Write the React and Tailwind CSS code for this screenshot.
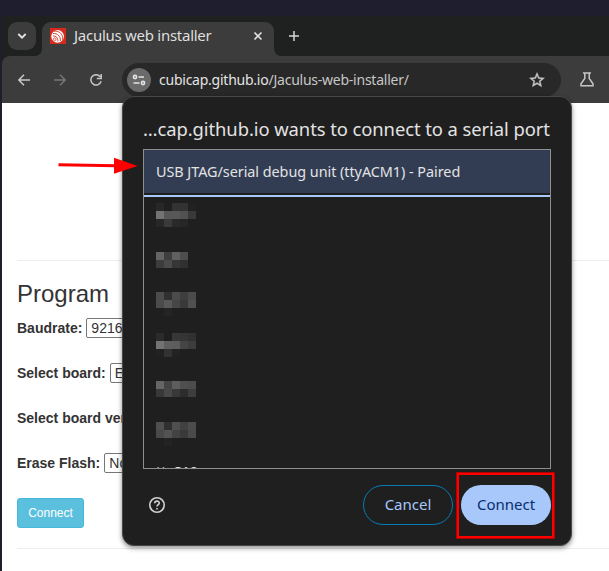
import React from 'react';

const NOTO = "font-['Noto_Sans',sans-serif]";

const SHADES = [
  { h: 'h-[49px]', rows: [['#272727', '#1f1f1f', '#333333', '#333333', '#212121'], ['#737373', '#575757', '#585858', '#525252', '#393939'], ['#272727', '#3a3a3a', '#292929', '#262626', '#1f1f1f']] },
  { h: 'h-[40px]', rows: [['#646464', '#3e3e3e', '#606060', '#4e4e4e', '#1f1f1f'], ['#3c3c3c', '#4b4b4b', '#363636', '#303030', '#1f1f1f']] },
  { h: 'h-[41px]', rows: [['#4c4c4c', '#303030', '#4b4b4b', '#3e3e3e', '#4b4b4b'], ['#4b4b4b', '#585858', '#464646', '#393939', '#505050'], ['#1f1f1f', '#242424', '#1f1f1f', '#1f1f1f', '#1f1f1f']] },
  { h: 'h-[48px]', rows: [['#2b2b2b', '#1f1f1f', '#373737', '#353535', '#313131'], ['#737373', '#5f5f5f', '#5d5d5d', '#454545', '#3d3d3d'], ['#212121', '#323232', '#222222', '#1f1f1f', '#1f1f1f']] },
  { h: 'h-[41px]', rows: [['#656565', '#454545', '#5d5d5d', '#4f4f4f', '#4c4c4c'], ['#383838', '#484848', '#383838', '#2c2c2c', '#3d3d3d']] },
  { h: 'h-[40px]', rows: [['#4f4f4f', '#303030', '#4f4f4f', '#414141', '#4c4c4c'], ['#494949', '#535353', '#434343', '#393939', '#4a4a4a'], ['#1f1f1f', '#232323', '#1f1f1f', '#1f1f1f', '#1f1f1f']] },
];

function TabStrip() {
  return (
    <div className="flex h-10 items-end bg-[#1f2020]">
      <button className="mb-[6px] ml-[6px] flex h-7 w-7 items-center justify-center rounded-[9px] bg-[#3c3c3c]">
        <svg width="10" height="8" viewBox="0 0 10 8" fill="none" stroke="#e3e3e3" strokeWidth="1.8"><path d="M1.3 2 5 5.7 8.7 2" /></svg>
      </button>
      <svg className="ml-0" width="6" height="34" viewBox="0 0 6 34"><path d="M6 26v8H0c4-1 6-4 6-8Z" fill="#3c3c3c" /></svg>
      <div className="flex h-[34px] w-[232px] items-center rounded-t-[9px] bg-[#3c3c3c] pb-[6px] pl-2 pr-[11px]">
        <svg width="16" height="16" viewBox="0 0 16 16">
          <path fill="#d52b1e" d="M0 0h16v16H0z" />
          <circle cx="7.600" cy="8.400" r="6.300" fill="#fff" />
          <g fill="none" stroke="#d52b1e" strokeWidth="0.9">
            <path d="M4.200 3.200c5.200-.6 9 3.400 8.500 8.600" />
            <path d="M3 5.500c4.500-.4 7.700 2.800 7.400 7.500" />
            <path d="M3 8c3.200-.2 5.200 2 4.900 5.500" />
          </g>
          <circle cx="4.800" cy="11.200" r="1.300" fill="#fff" stroke="#d52b1e" strokeWidth=".7" />
        </svg>
        <span className={`${NOTO} relative top-[-1px] ml-2 whitespace-nowrap text-[15px] leading-5 tracking-[-0.27px] text-[#dfdfdf]`}>Jaculus web installer</span>
        <svg className="ml-auto" width="10" height="10" viewBox="0 0 10 10" stroke="#e3e3e3" strokeWidth="1.6"><path d="m1.5 1.5 7 7m0-7-7 7" /></svg>
      </div>
      <svg width="6" height="34" viewBox="0 0 6 34"><path d="M0 26v8h6c-4-1-6-4-6-8Z" fill="#3c3c3c" /></svg>
      <svg className="mb-[15px] ml-[9px]" width="10" height="10" viewBox="0 0 10 10" stroke="#d6d6d6" strokeWidth="1.5"><path d="M5 0v10M0 5h10" /></svg>
    </div>
  );
}

function Toolbar() {
  return (
    <div className="bg-[#1f2020]">
      <div className="flex h-[47px] items-center rounded-tl-[8px] bg-[#3c3c3c] pl-4">
        <svg width="12" height="12" viewBox="0 0 12 12" fill="none" stroke="#c7c7c7" strokeWidth="1.5"><path d="M12 6H1M6 .8.9 6 6 11.2" /></svg>
        <svg className="ml-6" width="12" height="12" viewBox="0 0 12 12" fill="none" stroke="#757575" strokeWidth="1.5"><path d="M0 6h11M6 .8 11.1 6 6 11.2" /></svg>
        <svg className="ml-6" width="12" height="12" viewBox="0 0 12 12" fill="none" stroke="#c7c7c7" strokeWidth="1.5"><path d="M10.2 2.7A5.2 5.2 0 1 0 11.1 7.3M11.2 0v4.4H6.8" /></svg>
        <div className="ml-5 flex h-[34px] w-[439px] items-center rounded-full bg-[#282828] pl-[5px] pr-[15px]">
          <div className="flex h-6 w-6 items-center justify-center rounded-full bg-[#6a6a6a]">
            <svg width="14" height="12" viewBox="0 0 14 12" fill="none" stroke="#e3e3e3" strokeWidth="1.6"><circle cx="3" cy="3" r="1.6" /><path d="M6.5 3H12M1.500 9h6" /><circle cx="11" cy="9" r="1.6" /></svg>
          </div>
          <span className={`${NOTO} ml-2 whitespace-nowrap text-[14px] leading-5 tracking-[-0.24px] text-[#e3e3e3]`}>cubicap.github.io<span className="text-[#c7c7c7]">/Jaculus-web-installer/</span></span>
          <svg className="ml-auto" width="18" height="18" viewBox="0 0 24 24" fill="#c7c7c7" stroke="#c7c7c7" strokeWidth=".5"><path d="m22 9.24-7.19-.62L12 2 9.19 8.63 2 9.24l5.46 4.73L5.82 21 12 17.27 18.18 21l-1.63-7.03L22 9.24zM12 15.4l-3.76 2.27 1-4.28-3.32-2.88 4.38-.38L12 6.1l1.71 4.04 4.38.38-3.32 2.88 1 4.28L12 15.4z" /></svg>
        </div>
        <svg className="ml-[19px]" width="14" height="15" viewBox="0 0 14 15" fill="none" stroke="#c7c7c7" strokeWidth="1.5"><path d="M3 1h8M4.8 1v5.5L1 11.7v2h12v-2L9.2 6.5V1" /></svg>
      </div>
    </div>
  );
}

function Field({ label, value }) {
  return (
    <div className="mb-[25px] flex h-5 items-center whitespace-nowrap">
      <label className="font-bold">{label}</label>
      {value && <span className="ml-1 h-5 w-[120px] rounded-[2px] border border-[#767676] bg-white pl-1 leading-[18px]">{value}</span>}
    </div>
  );
}

function Dialog() {
  return (
    <div className={`${NOTO} absolute left-[122px] top-[96px] flex h-[450px] w-[450px] flex-col rounded-[12px] border border-[#484848] bg-[#1f1f1f] pl-5 pr-5 shadow-[0_2px_5px_rgba(0,0,0,0.45)]`}>
      <h1 className="mt-[18px] h-[34px] whitespace-nowrap text-[18.4px] leading-[27px] tracking-[-0.07px] text-[#e3e3e3]">…cap.github.io wants to connect to a serial port</h1>
      <div className="h-[320px] w-[408px] shrink-0 overflow-hidden border border-[#8e8e8e]">
        <div className="h-[43px] whitespace-nowrap bg-[#323d54] pl-3 text-[14.4px] leading-[43px] tracking-[-0.04px] text-[#e3e3e3]">USB JTAG/serial debug unit (ttyACM1) - Paired</div>
        <div className="mb-[6px] mt-[2px] h-[2px] bg-[#a8c7fa]" />
        {SHADES.map((item, i) => (
          <div key={i} className={`${item.h} pl-3`}>
            {item.rows.map((row, r) => (
              <div key={r} className="flex">
                {row.map((c, k) => <span key={k} className="h-2 w-2" style={{ backgroundColor: c }} />)}
              </div>
            ))}
          </div>
        ))}
        <div className="h-5 pl-3 text-[14.4px] leading-5 text-[#e3e3e3]">ttyS10</div>
      </div>
      <div className="mt-4 flex h-10 items-center">
        <svg className="ml-[5px]" width="18" height="18" viewBox="0 0 18 18" fill="none" stroke="#d0d0d0" strokeWidth="1.6"><circle cx="9" cy="9" r="7.2" /><path d="M6.7 7.2C6.8 4.4 11.3 4.5 11.3 7c0 1.7-2.3 1.8-2.3 3.6" /><path d="M9 12v1.5" /></svg>
        <button className="ml-auto h-10 w-[90px] rounded-full border border-[#047db7] pb-[2px] text-[15px] text-[#a8c7fa]">Cancel</button>
        <button className="ml-2 h-10 w-[90px] rounded-full bg-[#a8c7fa] pb-[2px] text-[15px] text-[#062e6f]">Connect</button>
      </div>
    </div>
  );
}

export default function App() {
  return (
    <div className="relative h-[571px] w-[609px] overflow-hidden bg-[#1e1e2e] pl-[2px] pt-4">
      <TabStrip />
      <Toolbar />
      <main className="h-[468px] bg-white pl-[15px] font-['Liberation_Sans',Arial,sans-serif] text-[14px] leading-5 text-[#333]">
        <div className="h-[157px]" />
        <hr className="border-[#eee]" />
        <h2 className="mb-[11px] mt-[19px] text-[24px] leading-[27px]">Program</h2>
        <Field label="Baudrate:" value="921600" />
        <Field label="Select board:" value="ESP32" />
        <Field label="Select board version:" />
        <Field label="Erase Flash:" value="No" />
        <button className="block h-[30px] w-[67px] rounded-[3px] border border-[#46b8da] bg-[#5bc0de] text-[12px] leading-[18px] text-white">Connect</button>
        <hr className="mt-5 border-[#eee]" />
      </main>
      <Dialog />
      <svg className="absolute left-[56px] top-[156px]" width="84" height="20" viewBox="0 0 84 20"><path d="M2.5 8.8 60 9.8" stroke="red" strokeWidth="3" /><path d="M58 1.8v16L81.500 10Z" fill="red" /></svg>
      <div className="absolute left-[456px] top-[472px] h-[67px] w-[99px] border-[3px] border-[#f00] outline-1 outline-offset-[-1px] outline-[#b00000]" />
    </div>
  );
}
